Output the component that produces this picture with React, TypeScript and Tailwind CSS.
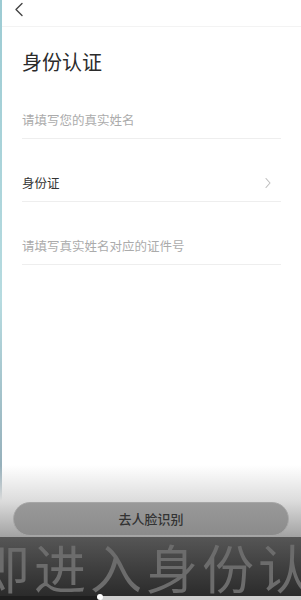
import React from "react";

const font = { fontFamily: '"Noto Sans CJK SC", "Noto Sans", sans-serif' };

export default function App() {
  return (
    <div
      className="relative w-[301px] h-[600px] overflow-hidden bg-white flex"
      style={font}
    >
      <div className="w-[2px] h-full bg-gradient-to-b from-[#9ccbd3] via-[#b6dbe0] to-[#7d8f9e]" />
      <div className="flex-1 flex flex-col">
        <div className="h-[27px] border-b border-[#f3f3f3] flex items-start pl-[11px] pt-[2px]">
          <svg width="12" height="15" viewBox="0 0 12 15" fill="none">
            <path d="M9 1.5 L3 7.5 L9 13.5" stroke="#444" strokeWidth="1.4" strokeLinecap="round" strokeLinejoin="round" />
          </svg>
        </div>
        <div className="px-[20px] flex flex-col">
          <div className="mt-[21px] text-[20px] leading-[28px] text-[#2b2b2b]">身份认证</div>
          <div className="h-[63px] border-b border-[#eeeeee] flex items-end pb-[9px]">
            <span className="text-[12.5px] leading-[18px] text-[#ababab]">请填写您的真实姓名</span>
          </div>
          <div className="h-[63px] border-b border-[#eeeeee] flex items-end justify-between pb-[9px]">
            <span className="text-[12.5px] leading-[18px] text-[#333]">身份证</span>
            <svg width="8" height="12" viewBox="0 0 8 12" fill="none" className="mr-[9px] mb-[3px]">
              <path d="M2 1.5 L6 6 L2 10.5" stroke="#bdbdbd" strokeWidth="1.1" strokeLinecap="round" strokeLinejoin="round" />
            </svg>
          </div>
          <div className="h-[63px] border-b border-[#eeeeee] flex items-end pb-[9px]">
            <span className="text-[12.5px] leading-[18px] text-[#ababab]">请填写真实姓名对应的证件号</span>
          </div>
        </div>
      </div>

      <div className="absolute left-0 right-0 bottom-0 flex flex-col">
        <div className="h-[72px] bg-gradient-to-b from-[#ffffff00] via-[#dcdcdc] to-[#a2a2a2] pt-[37px] pl-[13px] pr-[12px] pb-[1px]">
          <div className="h-[34px] rounded-full bg-gradient-to-b from-[#999999] to-[#8b8b8b] border border-[#a6a6a6] flex items-center justify-center">
            <span className="text-[13px] font-medium text-[#333]">去人脸识别</span>
          </div>
        </div>
        <div className="h-[59px] bg-gradient-to-b from-[#565656] to-[#2b2b2b] overflow-hidden flex items-center">
          <span className="-ml-[22px] whitespace-nowrap text-[52px] leading-none tracking-[4px] text-[#6c6c6c]">即进入身份认证</span>
        </div>
        <div className="relative h-[4px] flex">
          <div className="w-[100px] bg-[#1e1e1e]" />
          <div className="flex-1 bg-[#cfcfcf]" />
          <div className="absolute left-[97px] top-[-2px] w-[6px] h-[6px] rounded-full bg-white" />
        </div>
      </div>
    </div>
  );
}
